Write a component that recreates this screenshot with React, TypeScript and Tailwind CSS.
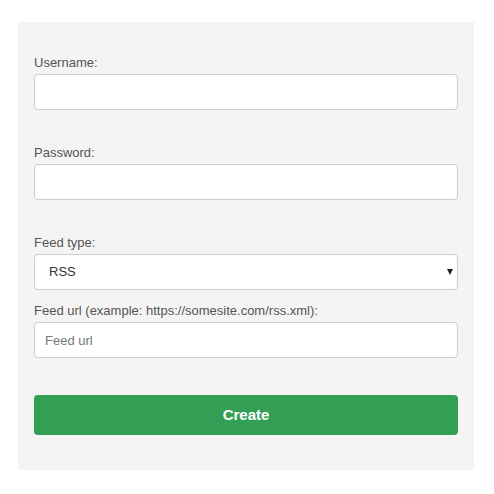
import React from "react";

export default function App() {
  const font = { fontFamily: '"Liberation Sans", Arial, sans-serif' };
  return (
    <div className="w-[494px] h-[494px] bg-white pt-[22px] pl-[18px]" style={font}>
      <div className="w-[456px] h-[448px] bg-[#f4f4f4] px-4 pt-8 flex flex-col">
        <label className="block text-[13px] leading-[18px] text-[#555] mb-[2px]">Username:</label>
        <input
          type="text"
          className="block w-full h-9 bg-white border border-[#ccc] rounded-[4px] px-[10px] text-[13px] outline-none"
        />
        <label className="block text-[13px] leading-[18px] text-[#555] mb-[2px] mt-[34px]">Password:</label>
        <input
          type="password"
          className="block w-full h-9 bg-white border border-[#ccc] rounded-[4px] px-[10px] text-[13px] outline-none"
        />
        <label className="block text-[13px] leading-[18px] text-[#555] mb-[2px] mt-[34px]">Feed type:</label>
        <div className="relative w-full h-9">
          <select
            defaultValue="RSS"
            className="appearance-none block w-full h-9 bg-white border border-[#ccc] rounded-[4px] pl-[14px] pr-6 text-[13px] text-[#333] outline-none"
            style={font}
          >
            <option value="RSS">RSS</option>
            <option value="Atom">Atom</option>
          </select>
          <div className="pointer-events-none absolute right-[5px] top-[15px] w-0 h-0 border-l-[3.5px] border-r-[3.5px] border-t-[6px] border-l-transparent border-r-transparent border-t-[#222]" />
        </div>
        <label className="block text-[13px] leading-[18px] text-[#555] mb-[2px] mt-3">
          Feed url (example: https://somesite.com/rss.xml):
        </label>
        <input
          type="text"
          placeholder="Feed url"
          className="block w-full h-9 bg-white border border-[#ccc] rounded-[4px] px-[10px] text-[13px] text-[#333] placeholder:text-[#777] outline-none"
          style={font}
        />
        <button
          className="mt-[37px] w-full h-10 bg-[#339f55] rounded-[4px] text-white font-bold text-[15px]"
          style={font}
        >
          Create
        </button>
      </div>
    </div>
  );
}
